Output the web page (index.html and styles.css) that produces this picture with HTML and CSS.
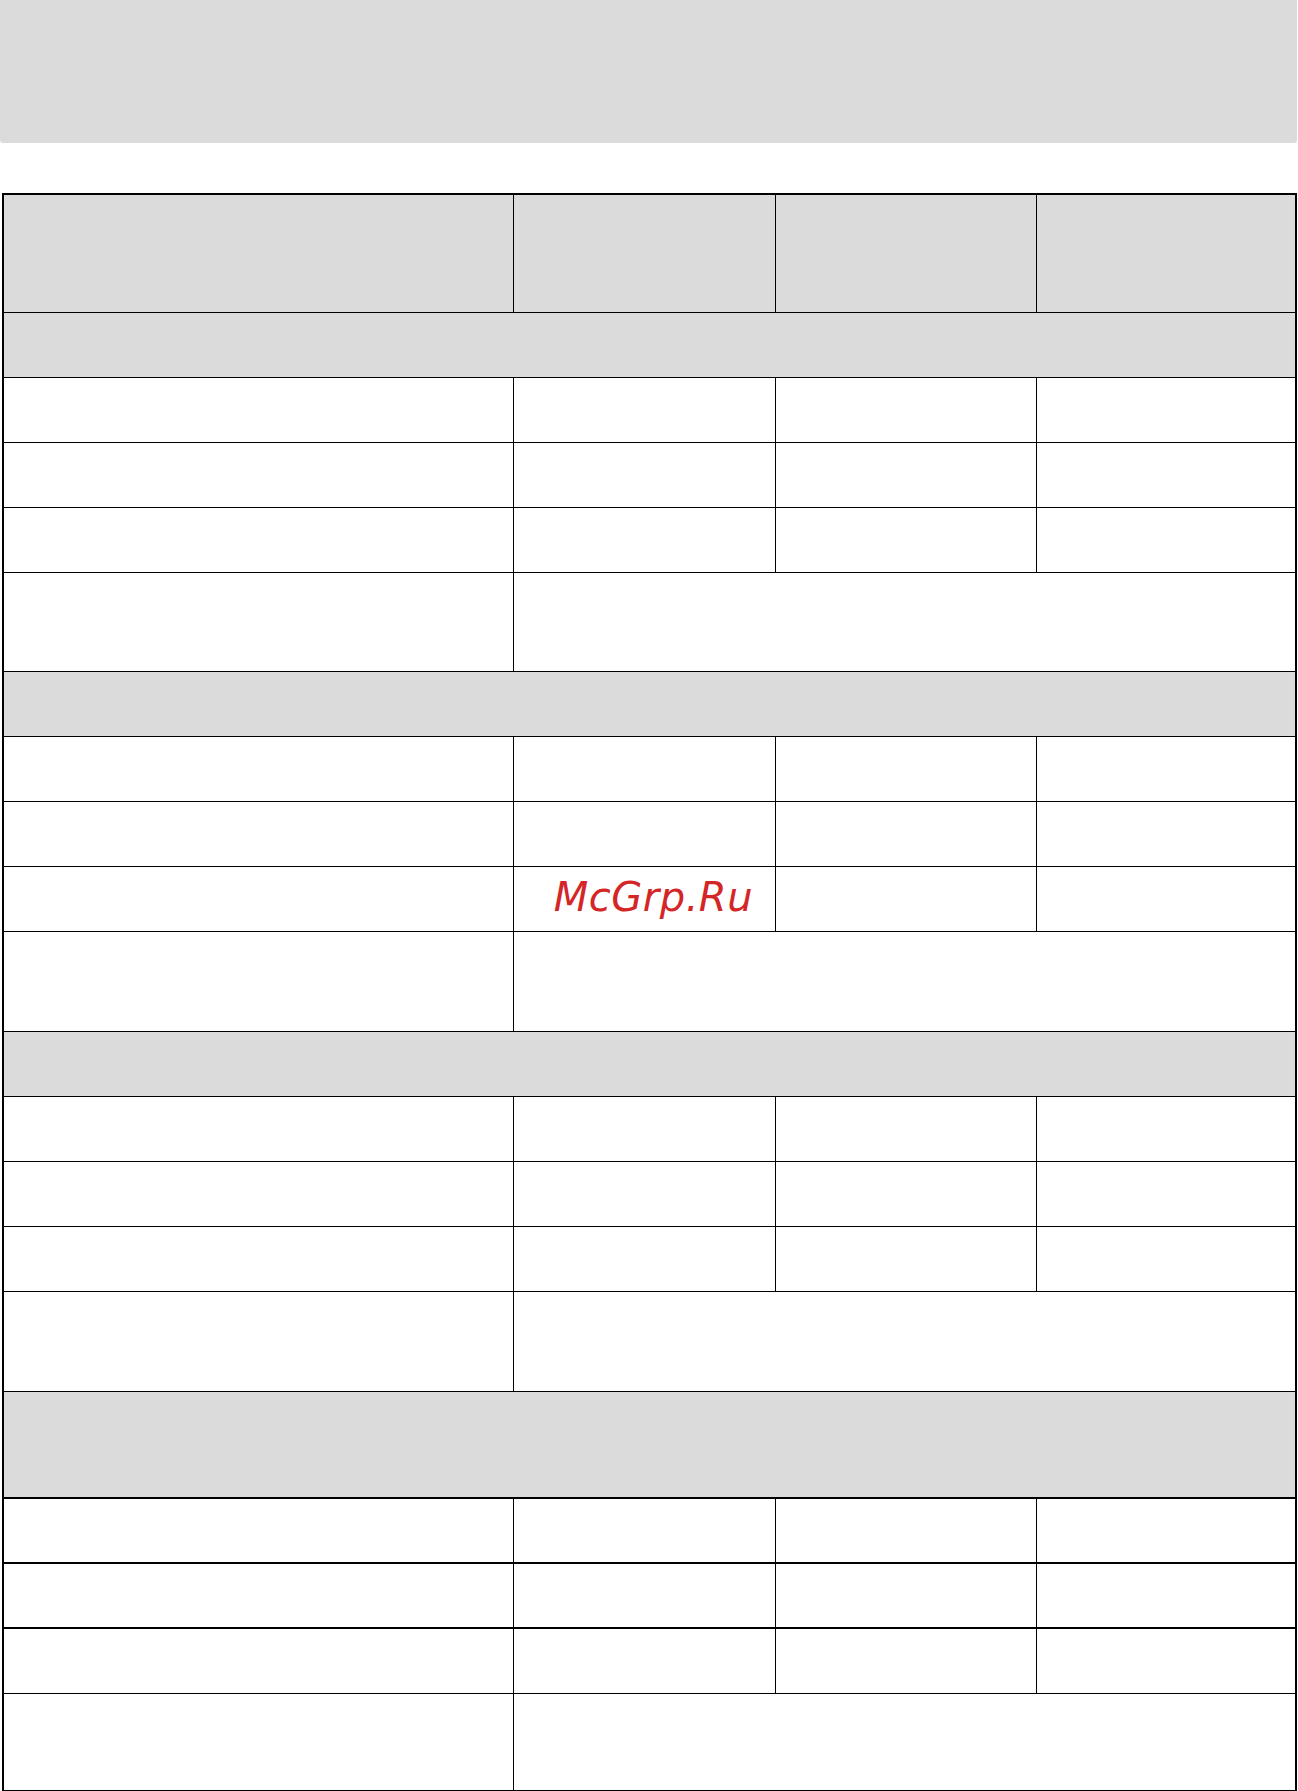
FILE: index.html
```html
<!DOCTYPE html>
<html lang="ru">
<head>
<meta charset="utf-8">
<title>Table</title>
<link rel="stylesheet" href="styles.css">
</head>
<body>
<div class="topbar"></div>
<table class="grid">
  <colgroup>
    <col class="c1"><col class="c2"><col class="c3"><col class="c4">
  </colgroup>
  <tr class="r-head shade">
    <td></td><td></td><td></td><td class="last"></td>
  </tr>
  <tr class="r-sec shade"><td colspan="4" class="last"></td></tr>
  <tr class="r-row"><td></td><td></td><td></td><td class="last"></td></tr>
  <tr class="r-row"><td></td><td></td><td></td><td class="last"></td></tr>
  <tr class="r-row"><td></td><td></td><td></td><td class="last"></td></tr>
  <tr class="r-merge"><td></td><td colspan="3" class="last"></td></tr>

  <tr class="r-sec shade"><td colspan="4" class="last"></td></tr>
  <tr class="r-row"><td></td><td></td><td></td><td class="last"></td></tr>
  <tr class="r-row"><td></td><td></td><td></td><td class="last"></td></tr>
  <tr class="r-row"><td></td><td class="mark">McGrp.Ru</td><td></td><td class="last"></td></tr>
  <tr class="r-merge2"><td></td><td colspan="3" class="last"></td></tr>

  <tr class="r-sec shade"><td colspan="4" class="last"></td></tr>
  <tr class="r-row"><td></td><td></td><td></td><td class="last"></td></tr>
  <tr class="r-row"><td></td><td></td><td></td><td class="last"></td></tr>
  <tr class="r-row"><td></td><td></td><td></td><td class="last"></td></tr>
  <tr class="r-merge2"><td></td><td colspan="3" class="last"></td></tr>

  <tr class="r-sec-tall shade thick"><td colspan="4" class="last"></td></tr>
  <tr class="r-row thick"><td></td><td></td><td></td><td class="last"></td></tr>
  <tr class="r-row thick"><td></td><td></td><td></td><td class="last"></td></tr>
  <tr class="r-row"><td></td><td></td><td></td><td class="last"></td></tr>
  <tr class="r-end"><td class="nob"></td><td colspan="3" class="last nob"></td></tr>
</table>
</body>
</html>
```
FILE: styles.css
```css
html, body {
  margin: 0;
  padding: 0;
  background: #ffffff;
  font-family: "DejaVu Sans", "Liberation Sans", sans-serif;
}

.topbar {
  width: 1297px;
  height: 143px;
  background: #dbdbdb;
  border-radius: 0 0 3px 3px;
}

.grid {
  margin: 50px 0 0 2px;
  width: 1295px;
  border: 2px solid #000;
  border-bottom-width: 1px;
  border-collapse: separate;
  border-spacing: 0;
  table-layout: fixed;
}

.c1 { width: 510px; }
.c2 { width: 262px; }
.c3 { width: 261px; }
.c4 { width: 258px; }

.grid td {
  padding: 0;
  border-right: 1px solid #000;
  border-bottom: 1px solid #000;
  background: #fff;
}

.grid td.last { border-right: none; }
.grid td.nob { border-bottom: none; }

.grid tr.shade td { background: #dbdbdb; }
.grid tr.thick td { border-bottom-width: 2px; }

.r-head { height: 118px; }
.r-sec { height: 65px; }
.r-row { height: 65px; }
.r-merge { height: 99px; }
.r-merge2 { height: 100px; }
.r-sec-tall { height: 107px; }
.r-end { height: 96px; }

.grid td.mark {
  text-align: right;
  padding: 0 22px 5px 0;
  vertical-align: middle;
  font-family: "DejaVu Sans", sans-serif;
  font-style: italic;
  font-size: 40px;
  letter-spacing: 0.5px;
  color: #d42626;
  white-space: nowrap;
}
```
